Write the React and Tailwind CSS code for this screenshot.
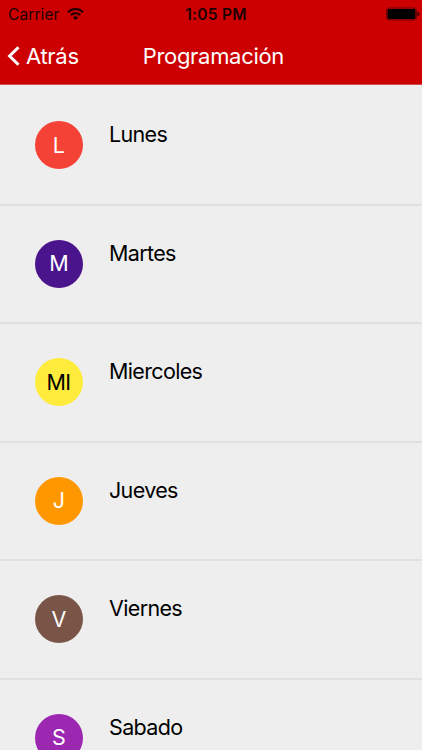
const days = [
  { name: 'Lunes',     initials: 'L',  badge: 'bg-[#f44336] text-white' },
  { name: 'Martes',    initials: 'M',  badge: 'bg-[#4a148c] text-white' },
  { name: 'Miercoles', initials: 'MI', badge: 'bg-[#ffeb3b] text-black' },
  { name: 'Jueves',    initials: 'J',  badge: 'bg-[#ff9800] text-white' },
  { name: 'Viernes',   initials: 'V',  badge: 'bg-[#795548] text-white' },
  { name: 'Sabado',    initials: 'S',  badge: 'bg-[#9c27b0] text-white' },
];

function StatusBar() {
  return (
    <div className="grid grid-cols-3 items-center h-7 pl-2 text-[#1c0000]">
      <div className="flex items-center gap-[7px] pt-px">
        <span className="text-[15.5px] tracking-[0.1px] leading-none">Carrier</span>
        <svg width="17" height="12" viewBox="0 0 17 12" className="-mt-0.5" fill="none" stroke="currentColor" strokeWidth="2">
          <path d="M1 4.2a10.6 10.6 0 0 1 15 0" />
          <path d="M3.8 7.1a6.6 6.6 0 0 1 9.4 0" />
          <path d="M8.5 12 6 9.4a3.6 3.6 0 0 1 5 0Z" fill="currentColor" stroke="none" />
        </svg>
      </div>
      <span className="pl-0.5 pt-px text-center text-[15.5px] font-semibold tracking-[0.25px] leading-none">1:05 PM</span>
      <div className="flex justify-end pr-0.5">
        <svg width="34" height="14" viewBox="0 0 34 14">
          <rect x="0.5" y="1" width="30" height="12" rx="2.5" fill="none" stroke="#6b0000" />
          <rect x="1.5" y="2" width="28" height="10" rx="1.5" fill="#000" />
          <path d="M31.5 5a2 2 0 0 1 0 4Z" fill="#330000" />
        </svg>
      </div>
    </div>
  );
}

function NavBar() {
  return (
    <div className="grid grid-cols-3 items-center h-14 pb-px text-white">
      <button className="flex items-center gap-[6px] pl-[7px] text-[22px] tracking-[-0.3px] leading-none">
        <svg width="13" height="20" viewBox="0 0 13 20" fill="none" stroke="currentColor" strokeWidth="3">
          <path d="M11.5 1.2 2.6 10l8.9 8.8" />
        </svg>
        Atrás
      </button>
      <h1 className="pl-0.5 text-center text-[22px] tracking-[-0.3px] leading-none whitespace-nowrap">Programación</h1>
    </div>
  );
}

function DayRow({ day }) {
  return (
    <li className="flex items-start h-[118.5px] pt-[34.4px] pl-[35px] border-b-2 border-[#e0e0e0]">
      <div className={`flex items-center justify-center size-12 pr-px rounded-full text-[21.5px] tracking-[-0.7px] leading-none ${day.badge}`}>
        {day.initials}
      </div>
      <span className="ml-[26px] pt-px text-[21.5px] tracking-[-0.65px] leading-[25px] text-black">{day.name}</span>
    </li>
  );
}

export default function App() {
  return (
    <div className="h-[750px] overflow-hidden bg-[#eeeeee] font-['Inter',sans-serif]">
      <header className="h-[85px] bg-[#cc0000] border-b border-[#d05050]">
        <StatusBar />
        <NavBar />
      </header>
      <ul className="pt-[2px]">
        {days.map((day) => (
          <DayRow key={day.name} day={day} />
        ))}
      </ul>
    </div>
  );
}
